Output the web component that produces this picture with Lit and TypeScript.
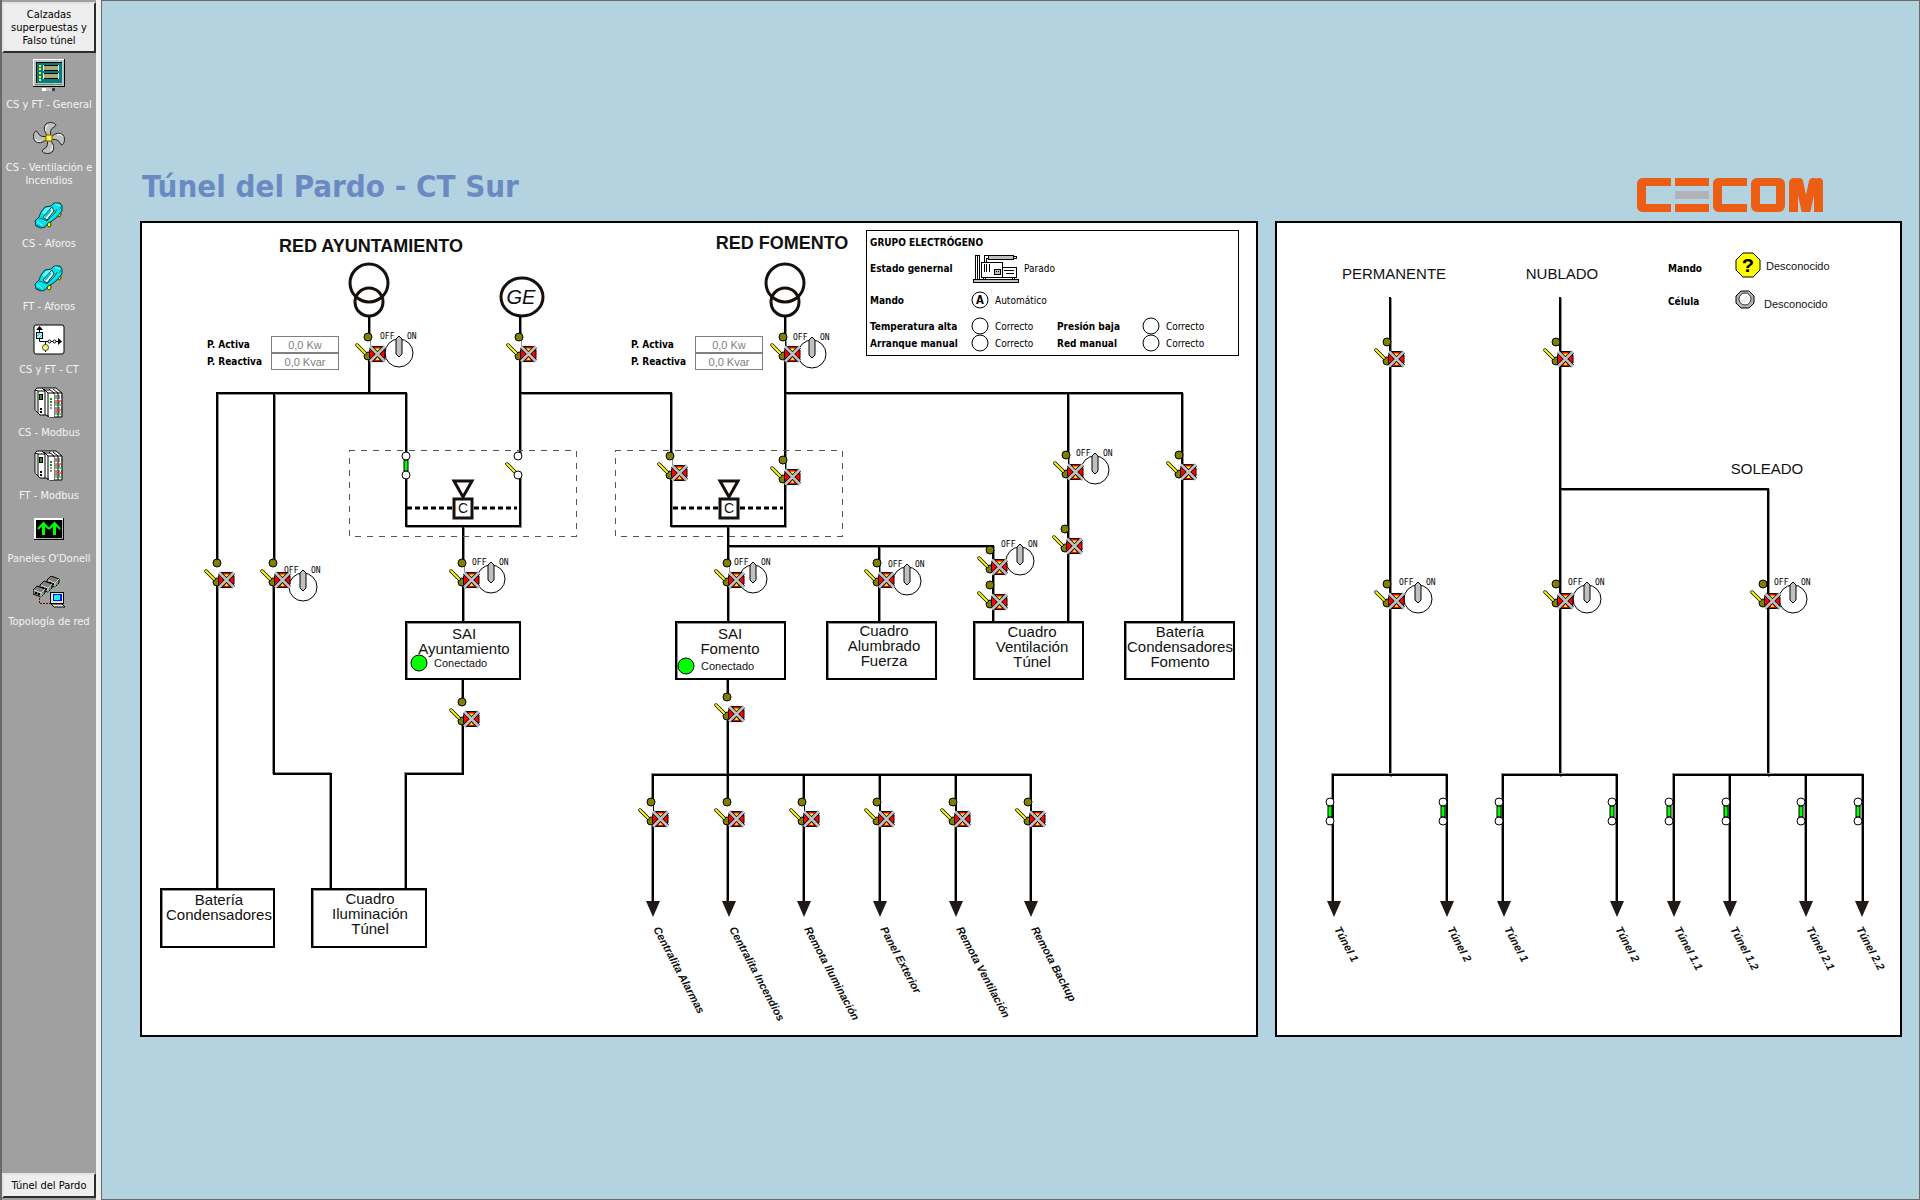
import { LitElement, html, svg, css, TemplateResult } from "lit";
import { customElement, property } from "lit/decorators.js";

type Point = [number, number];

/* ---------- Sidebar icons ---------- */

const monitorIcon = svg`
  <rect x="0" y="0" width="32" height="28" fill="#000"/>
  <rect x="0" y="0" width="31" height="27" fill="#fff"/>
  <rect x="1" y="1" width="30" height="26" fill="#c0c0c0"/>
  <rect x="3" y="3" width="26" height="21" fill="#000"/>
  <rect x="4" y="4" width="25" height="20" fill="#008080"/>
  <path d="M7 6v2M7 9v2M7 13v2M7 17v2M7 20v2" stroke="#ff0" stroke-width="2"/>
  <path d="M11 6.500h14M11 11.500h14M11 14.500h14M11 19.500h14" stroke="#000"/>
  <rect x="11" y="7" width="14" height="4" fill="#b0a878"/>
  <rect x="11" y="15" width="14" height="4" fill="#b0a878"/>
  <path d="M10.500 6v6M25.500 6v6M10.500 14v6M25.500 14v6" stroke="#e8e8e8"/>
  <path d="M2 25.500h27" stroke="#808080"/>
  <rect x="21" y="25" width="2" height="1" fill="#0f0"/>
  <rect x="9" y="29" width="4" height="3" fill="#fff"/>
  <rect x="13" y="29" width="6" height="3" fill="#c0c0c0"/>
  <rect x="19" y="29" width="3" height="3" fill="#404040"/>
`;

const blade = "M15 14C11 10 10 5 13 2c4-3 9-1 10 1 0 2-4 2-5 5-1 2 0 4-1 6z";
const fanIcon = svg`
  <g fill="#c0c0c0" stroke="#222">
    <path d=${blade}/>
    <path d=${blade} transform="rotate(90 16 16)"/>
    <path d=${blade} transform="rotate(180 16 16)"/>
    <path d=${blade} transform="rotate(270 16 16)"/>
  </g>
  <g stroke="#fff" fill="none">
    <path d="M13 9c-1-3 0-5 2-6"/><path d="M24 13c3-1 5 0 6 2"/>
    <path d="M19 23c1 3 0 5-2 6"/><path d="M8 19c-3 1-5 0-6-2"/>
  </g>
  <rect x="13" y="13" width="6" height="6" fill="#ff0" stroke="#806000"/>
  <rect x="15" y="15" width="2" height="2" fill="#fff"/>
`;

const carIcon = svg`
  <ellipse cx="26" cy="16" rx="2" ry="3" fill="#ff0" stroke="#403800"/>
  <ellipse cx="16" cy="26" rx="2" ry="3" fill="#ff0" stroke="#403800"/>
  <path d="M3 28 2 23 6 19 8 14 12 9 18 8 21 5 27 5 29 8 29 13 23 20 19 23 15 25 12 29 8 30z"
        fill="#00e4ec" stroke="#003c40"/>
  <path d="M9 15 13 10 18 9 12 16z" fill="#60ffff"/>
  <path d="M19 9 21 13 14 22 10 19z" fill="#fff" stroke="#003c40"/>
  <path d="M12 19 18 12" stroke="#00c8d0" stroke-width="2" fill="none"/>
  <path d="M6 20 10 21 14 23 22 15 24 11" stroke="#006068" fill="none"/>
  <path d="M22 6 27 8M4 24 9 27" stroke="#9ffcff" fill="none"/>
  <path d="M4 27 8 29M26 12 28 9" stroke="#008890" fill="none"/>
`;

const schemeIcon = svg`
  <rect x="1" y="1" width="30" height="29" rx="2" fill="#fff" stroke="#000"/>
  <path d="M6.500 4v13.500H28M12.500 17v11" stroke="#000" fill="none"/>
  <path d="M3 6 6.500 2 10 6zM25 14 29 17.500 25 21z" fill="#000"/>
  <rect x="3.500" y="8.500" width="6" height="6" fill="#9ff" stroke="#000"/>
  <path d="M4 12 7 9M6 14 9 11" stroke="#4ac"/>
  <circle cx="16.500" cy="17.500" r="1.500" fill="#fff" stroke="#000"/>
  <circle cx="21.500" cy="17.500" r="1.500" fill="#fff" stroke="#000"/>
  <circle cx="12.500" cy="23.500" r="3" fill="#ff8" stroke="#440"/>
`;

const rackIcon = svg`
  <path d="M2 3 4 1H23L29 6V30H17L13 28H7L2 23z" fill="#fff" stroke="#000"/>
  <path d="M2 3 5 4V26M5 4 12 4V28M12 4 9 1M12 3H17" stroke="#000" fill="none"/>
  <path d="M3 5V24" stroke="#a0a0a0"/>
  <rect x="6.500" y="7.500" width="3" height="5" fill="#0a0" stroke="#000"/>
  <path d="M8 21v2M8 24v2" stroke="#000" stroke-width="2"/>
  <path d="M15 6 11 2M21 6 16 2M25 6 20 2M15 6V30M21 6V30M25 6V30M15 6H29" stroke="#000" fill="none"/>
  <rect x="16" y="7" width="5" height="23" fill="#fff"/>
  <path d="M18 11v2M18 14v2" stroke="#00a000" stroke-width="2"/>
  <path d="M18 17v2M18 20v2" stroke="#909090" stroke-width="2"/>
  <path d="M22 9h7M22 11h7M22 16h7M22 21h7M22 25h7" stroke="#222" stroke-dasharray="2 1"/>
  <path d="M22 14h7M22 23h7" stroke="#c00"/>
  <path d="M22 18h7M22 27h7" stroke="#080"/>
`;

const panelIcon = svg`
  <rect x="1" y="5" width="30" height="22" fill="#000"/>
  <rect x="1" y="5" width="29" height="21" fill="#fff"/>
  <rect x="3" y="7" width="27" height="19" fill="#b0b0b0"/>
  <rect x="3" y="7" width="26" height="18" fill="#000"/>
  <path d="M10.500 10v12M21.500 10v12" stroke="#0f0" stroke-width="3"/>
  <path d="M5 16 10.500 10 16 16M16 16 21.500 10 27 16" stroke="#0f0" stroke-width="2" fill="none"/>
`;

const hub = (x: number, y: number) => svg`
  <path d="M${x} ${y + 4} ${x + 4} ${y} ${x + 12} ${y + 3} ${x + 12} ${y + 7} ${x + 8} ${y + 11} ${x} ${y + 8}z"
        fill="#808080" stroke="#000"/>
  <path d="M${x + 1} ${y + 4} ${x + 8} ${y + 7} ${x + 12} ${y + 3}M${x + 8} ${y + 7}v4" stroke="#d0d0d0" fill="none"/>
  <path d="M${x + 2} ${y + 7}h2M${x + 5} ${y + 8}h2" stroke="#000" stroke-width="2"/>
  <path d="M${x + 9} ${y + 8}h2" stroke="#0f0"/>
`;
const networkIcon = svg`
  ${hub(14, 0)}${hub(7, 5)}${hub(0, 10)}
  <path d="M6.500 22V27.500H17" stroke="#700000" stroke-dasharray="2 1" fill="none"/>
  <rect x="17.500" y="16.500" width="13" height="11" fill="#e8e8e0" stroke="#000"/>
  <rect x="20" y="18" width="9" height="7" fill="#00f"/>
  <rect x="21" y="19" width="6" height="5" fill="#0ff"/>
  <path d="M18 28H29L32 31H21z" fill="#e8e8e0" stroke="#000"/>
`;

interface NavItem {
  label: string;
  icon: TemplateResult<2>;
}

const navItems: NavItem[] = [
  { label: "CS y FT - General", icon: monitorIcon },
  { label: "CS - Ventilación e\nIncendios", icon: fanIcon },
  { label: "CS - Aforos", icon: carIcon },
  { label: "FT - Aforos", icon: carIcon },
  { label: "CS y FT - CT", icon: schemeIcon },
  { label: "CS - Modbus", icon: rackIcon },
  { label: "FT - Modbus", icon: rackIcon },
  { label: "Paneles O'Donell", icon: panelIcon },
  { label: "Topología de red", icon: networkIcon },
];

@customElement("nav-bar")
export class NavBar extends LitElement {
  static styles = css`
    :host {
      display: flex;
      flex-direction: column;
      flex: none;
      width: 94px;
      padding: 2px 0;
      background: #a0a0a0;
      border-left: 2px solid #696969;
      border-right: 5px solid #f0f0f0;
      font: 11px/13px "DejaVu Sans Condensed", "DejaVu Sans", sans-serif;
    }
    .group {
      padding: 4px 0;
      border: 2px outset #e3e3e3;
      border-right-color: #808080;
      border-bottom-color: #808080;
      background: #eee;
      color: #000;
      font: inherit;
      white-space: pre-line;
    }
    .items {
      flex: 1;
      display: flex;
      flex-direction: column;
      gap: 11px;
      margin: 0;
      padding: 6px 0 0;
      list-style: none;
    }
    .item {
      display: flex;
      flex-direction: column;
      align-items: center;
      gap: 7px;
      width: 100%;
      padding: 0;
      border: 0;
      background: none;
      color: #f4f4f4;
      font: inherit;
      white-space: pre-line;
    }
    .icon {
      display: block;
      width: 32px;
      height: 32px;
    }
  `;

  render() {
    return html`
      <button class="group">${"Calzadas\nsuperpuestas y\nFalso túnel"}</button>
      <ul class="items">
        ${navItems.map(
          (item) => html`
            <li>
              <button class="item">
                <svg class="icon" viewBox="0 0 32 32" aria-hidden="true">${item.icon}</svg>
                <span>${item.label}</span>
              </button>
            </li>
          `
        )}
      </ul>
      <button class="group">Túnel del Pardo</button>
    `;
  }
}

/* ---------- Company logo, built from bars ---------- */

@customElement("brand-logo")
export class BrandLogo extends LitElement {
  static styles = css`
    :host {
      display: flex;
      gap: 4px;
      height: 34px;
    }
    .open,
    .ring {
      box-sizing: border-box;
      width: 34px;
      border: 8px solid #eb5e14;
      border-width: 8px 9px;
      border-radius: 6px;
    }
    .open {
      border-right: 0;
      border-radius: 6px 0 0 6px;
    }
    .bars {
      display: flex;
      flex-direction: column;
      justify-content: space-between;
      width: 34px;
    }
    .bar {
      height: 8px;
      background: #eb5e14;
    }
    .bar.mid {
      background: #b2b2b8;
    }
    .peaks {
      display: flex;
      width: 34px;
    }
    .post {
      flex: none;
      width: 9px;
      background: #eb5e14;
      border-radius: 5px 4px 0 0;
    }
    .slope {
      flex: none;
      width: 8px;
      background: #eb5e14;
      transform: skewX(12deg);
      border-radius: 3px 3px 0 0;
    }
    .slope.back {
      transform: skewX(-12deg);
    }
  `;

  render() {
    return html`
      <span class="open"></span>
      <span class="bars"><i class="bar"></i><i class="bar mid"></i><i class="bar"></i></span>
      <span class="open"></span>
      <span class="ring"></span>
      <span class="peaks">
        <i class="post"></i><i class="slope"></i><i class="slope back"></i><i class="post"></i>
      </span>
    `;
  }
}

/* ---------- Diagram symbols ---------- */

const wires = (d: string, side = 1) => svg`
  <path class="wire soft" d=${d} transform="translate(${side} ${side})"/>
  <path class="wire" d=${d}/>
`;

const lever = svg`
  <path d="M-11 8-3 16" stroke="#000" stroke-width="3.500" stroke-linecap="round"/>
  <path d="M-11 8-3 16" stroke="#ff0" stroke-width="2" stroke-linecap="round"/>
`;

const breaker = ([x, y]: Point) => svg`
  <g transform="translate(${x} ${y})">
    <rect x="-14" y="0" width="16" height="19" fill="#fff"/>
    <circle class="terminal" cx="0" cy="0" r="4"/>
    <circle class="terminal" cx="0" cy="19" r="4"/>
    ${lever}
    <path d="M5 9.500H13.500L17 13V21L13.500 24.500H5L1.500 21V13z" fill="#f00" stroke="#000"/>
    <path d="M6 11.500H13L9.500 15zM7.500 23H11.500L9.500 20z" fill="#ff0"/>
    <path d="M2.500 10 16.500 24M16.500 10 2.500 24" stroke="#000" stroke-width="4"/>
    <path d="M2 9.500 17 24.500M17 9.500 2 24.500" stroke="#c0c0c0" stroke-width="2.500"/>
  </g>
`;

const openContact = ([x, y]: Point) => svg`
  <g transform="translate(${x} ${y})">
    <rect x="-14" y="0" width="18" height="19" fill="#fff"/>
    <circle class="contact" cx="0" cy="0" r="4"/>
    ${lever}
    <circle class="contact" cx="0" cy="19" r="4"/>
  </g>
`;

const closedContact = ([x, y]: Point) => svg`
  <g transform="translate(${x} ${y})">
    <rect x="-2" y="4" width="4" height="11" fill="#0f0" stroke="#000"/>
    <circle class="contact" cx="0" cy="0" r="4"/>
    <circle class="contact" cx="0" cy="19" r="4"/>
  </g>
`;

const selector = ([x, y]: Point) => svg`
  <g transform="translate(${x} ${y})">
    <circle r="14" fill="#fff" stroke="#000"/>
    <path d="M0-17 3-14V1L0 4-3 1V-14z" fill="#c0c0c0" stroke="#000"/>
    <text class="pos" x="-19" y="-14">OFF</text>
    <text class="pos" x="8" y="-14">ON</text>
  </g>
`;

const transformer = (x: number) => svg`
  <circle class="ring" cx=${x} cy="283" r="19"/>
  <circle class="ring" cx=${x} cy="302" r="14"/>
`;

const transferUnit = (x: number) => svg`
  <rect class="zone" x=${x - 114} y="450" width="227" height="86"/>
  <path class="link" d="M${x - 56} 508H${x - 11}M${x + 11} 508H${x + 54}"/>
  <path class="solid" d="M${x - 9} 481H${x + 9}L${x} 497z"/>
  <rect class="solid" x=${x - 9} y="499" width="18" height="19"/>
  <text class="mark" x=${x} y="513">C</text>
`;

const unit = (x: number, y: number, w: number, h: number) => svg`
  <rect class="box soft" x=${x + 1} y=${y + 1} width=${w - 1} height=${h - 1}/>
  <rect class="box edge" x=${x} y=${y} width=${w} height=${h}/>
`;

const caption = (x: number, y: number, lines: string[]) => svg`
  <text class="caption">
    ${lines.map((line, i) => svg`<tspan x=${x} y=${y + i * 15}>${line}</tspan>`)}
  </text>
`;

const online = (x: number, y: number) => svg`
  <circle cx=${x} cy=${y} r="8" fill="#0f0" stroke="#000"/>
  <text class="small" x=${x + 15} y=${y + 4}>Conectado</text>
`;

const feeder = (x: number, label: string, labelX = x) => svg`
  <path d="M${x - 7} 901H${x + 7}L${x} 917z" fill="#1f1a17"/>
  <text class="feeder" transform="translate(${labelX} 929) rotate(62)">${label}</text>
`;

const diagramStyles = css`
  :host {
    display: block;
    border: 2px solid #000;
    background: #fff;
  }
  .canvas {
    display: block;
    width: 100%;
  }
  .wire {
    fill: none;
    stroke: #000;
    stroke-width: 2;
    stroke-linecap: square;
  }
  .wire.soft {
    stroke: #948f8c;
  }
  .terminal {
    fill: #808000;
    stroke: #000;
  }
  .contact {
    fill: #fff;
    stroke: #000;
  }
  .ring,
  .solid {
    fill: none;
    stroke: #15100e;
    stroke-width: 3;
  }
  .solid {
    fill: #fff;
  }
  .zone {
    fill: none;
    stroke: #555;
    stroke-dasharray: 6 6;
    shape-rendering: crispEdges;
  }
  .link {
    fill: none;
    stroke: #000;
    stroke-width: 3;
    stroke-dasharray: 5 3;
  }
  .box {
    fill: #fff;
    stroke: #948f8c;
    stroke-width: 2;
  }
  .box.edge {
    fill: none;
    stroke: #000;
  }
  text {
    font-family: "Liberation Sans", Arial, sans-serif;
    fill: #111;
  }
  .pos {
    font: 8px "DejaVu Sans Mono", monospace;
    fill: #000;
  }
  .mark {
    font-size: 14px;
    text-anchor: middle;
  }
  .caption {
    font-size: 15px;
    text-anchor: middle;
  }
  .source {
    font-size: 18px;
    font-weight: bold;
    text-anchor: middle;
  }
  .generator {
    font-size: 20px;
    font-style: italic;
    text-anchor: middle;
  }
  .feeder {
    font-size: 11px;
    font-style: italic;
    font-weight: bold;
  }
  .small {
    font-size: 11px;
  }
  .strong {
    font: bold 10px "DejaVu Sans Condensed", "DejaVu Sans", sans-serif;
    fill: #000;
  }
`;

@customElement("power-readout")
export class PowerReadout extends LitElement {
  static styles = css`
    :host {
      display: grid;
      grid-template-columns: 64px 68px;
      grid-auto-rows: 17px;
      align-items: stretch;
      font: bold 10px/17px "DejaVu Sans Condensed", "DejaVu Sans", sans-serif;
    }
    .value {
      box-sizing: border-box;
      width: 100%;
      min-width: 0;
      height: 17px;
      margin: 0;
      padding: 0;
      border: 1px solid #808080;
      background: #fff;
      color: #808080;
      font: 11px "Liberation Sans", Arial, sans-serif;
      text-align: center;
    }
  `;

  render() {
    return html`
      <label for="active">P. Activa</label>
      <input class="value" id="active" readonly value="0,0 Kw" />
      <label for="reactive">P. Reactiva</label>
      <input class="value" id="reactive" readonly value="0,0 Kvar" />
    `;
  }
}

@customElement("generator-status")
export class GeneratorStatus extends LitElement {
  static styles = css`
    :host {
      display: grid;
      box-sizing: border-box;
      height: 100%;
      grid-template-columns: 102px 85px 86px 1fr;
      grid-template-rows: 22px 30px 35px 17px 17px;
      align-items: center;
      padding-left: 3px;
      border: 1px solid #000;
      background: #fff;
      color: #000;
      font: 10px/13px "DejaVu Sans Condensed", "DejaVu Sans", sans-serif;
    }
    .title,
    .name {
      margin: 0;
      font-size: 10px;
      font-weight: bold;
    }
    .title {
      grid-column: 1 / -1;
    }
    .wide {
      grid-column: 2 / -1;
    }
    .state {
      display: flex;
      align-items: center;
      gap: 6px;
    }
    .lamp {
      display: block;
      flex: none;
      overflow: visible;
    }
    .letter {
      font: bold 13px "Liberation Mono", monospace;
      text-anchor: middle;
    }
  `;

  private lamp(letter = "") {
    return html`
      <svg class="lamp" width="17" height="17" viewBox="0 0 17 17" aria-hidden="true">
        <circle cx="8" cy="8" r="8" fill="#fff" stroke="#000" />
        <text class="letter" x="8" y="12">${letter}</text>
      </svg>
    `;
  }

  private state(name: string) {
    return html`
      <span class="name">${name}</span>
      <span class="state">${this.lamp()}Correcto</span>
    `;
  }

  render() {
    return html`
      <h2 class="title">GRUPO ELECTRÓGENO</h2>
      <span class="name">Estado genernal</span>
      <span class="state wide">
        <svg class="lamp" width="46" height="29" viewBox="0 0 46 29" shape-rendering="crispEdges" aria-hidden="true">
          <g fill="#fff" stroke="#000">
            <path d="M3 2 5 1H7V25H3zM5 1V25" />
            <path d="M12 8V3Q12 1 14 1H17V4H14V8" />
            <rect x="16" y="1" width="25" height="4" fill="#c0c0c0" />
            <rect x="41" y="2" width="3" height="2" />
            <rect x="9" y="8" width="21" height="15" />
            <path d="M12 10V18M14 10V18M17 10V18" />
            <path d="M30 13H44V23H30zM32 16H42M34 19H42" />
            <rect x="22" y="15" width="6" height="5" fill="#c0c0c0" />
            <path d="M24 17v1M26 17v1" />
            <path d="M11 23v2M13 23v2M40 23v2M42 23v2" />
            <rect x="1" y="25" width="45" height="3" fill="#c0c0c0" />
          </g>
        </svg>
        Parado
      </span>
      <span class="name">Mando</span>
      <span class="state wide">${this.lamp("A")}Automático</span>
      ${this.state("Temperatura alta")} ${this.state("Presión baja")}
      ${this.state("Arranque manual")} ${this.state("Red manual")}
    `;
  }
}

@customElement("supply-diagram")
export class SupplyDiagram extends LitElement {
  static styles = diagramStyles;

  private breakers: Point[] = [
    [368, 337], [519, 337], [783, 337],
    [217, 563], [273, 563], [462, 563], [462, 702],
    [670, 456], [783, 460], [727, 563], [727, 697],
    [877, 563], [990, 550], [990, 585],
    [1066, 455], [1065, 529], [1179, 455],
    [651, 802], [727, 802], [802, 802], [877, 802], [953, 802], [1028, 802],
  ];

  private selectors: Point[] = [
    [399, 353], [812, 354], [303, 587], [491, 579],
    [753, 579], [907, 581], [1020, 561], [1095, 470],
  ];

  render() {
    return html`
      <svg class="canvas" viewBox="142 223 1114 812">
        ${wires(`M369 317V393M217 889V393H406V526H520V393H671V526H785V317
          M520 316V393M463 526V622M728 526V622M728 546H993V622M879 546V622
          M785 393H1182V622M1068 393V622M274 393V560`)}
        ${wires(`M274 560V774H331V889M463 679V774H406V889
          M728 679V901M653 901V775H1031V901M804 775V901M880 775V901M956 775V901`, -1)}
        ${transferUnit(463)} ${transferUnit(729)}
        ${transformer(369)} ${transformer(785)}
        <ellipse class="ring" cx="522" cy="297" rx="21" ry="19" />
        <text class="generator" x="521" y="304">GE</text>
        <text class="source" x="371" y="252">RED AYUNTAMIENTO</text>
        <text class="source" x="782" y="249">RED FOMENTO</text>

        ${unit(161, 889, 113, 58)} ${unit(312, 889, 114, 58)}
        ${unit(406, 622, 114, 57)} ${unit(676, 622, 109, 57)}
        ${unit(827, 622, 109, 57)} ${unit(974, 622, 109, 57)} ${unit(1125, 622, 109, 57)}
        ${caption(219, 905, ["Batería", "Condensadores"])}
        ${caption(370, 904, ["Cuadro", "Iluminación", "Túnel"])}
        ${caption(464, 639, ["SAI", "Ayuntamiento"])}
        ${caption(730, 639, ["SAI", "Fomento"])}
        ${caption(884, 636, ["Cuadro", "Alumbrado", "Fuerza"])}
        ${caption(1032, 637, ["Cuadro", "Ventilación", "Túnel"])}
        ${caption(1180, 637, ["Batería", "Condensadores", "Fomento"])}
        ${online(419, 663)} ${online(686, 666)}

        ${closedContact([406, 456])} ${openContact([518, 456])}
        ${this.selectors.map(selector)} ${this.breakers.map(breaker)}

        ${feeder(653, "Centralita Alarmas")} ${feeder(729, "Centralita Incendios")}
        ${feeder(804, "Remota Iluminación")} ${feeder(880, "Panel Exterior")}
        ${feeder(956, "Remota Ventilación")} ${feeder(1031, "Remota Backup")}

        <foreignObject x="207" y="336" width="132" height="34">
          <power-readout></power-readout>
        </foreignObject>
        <foreignObject x="631" y="336" width="132" height="34">
          <power-readout></power-readout>
        </foreignObject>
        <foreignObject x="866" y="230" width="373" height="126">
          <generator-status></generator-status>
        </foreignObject>
      </svg>
    `;
  }
}

@customElement("lighting-diagram")
export class LightingDiagram extends LitElement {
  static styles = [
    diagramStyles,
    css`
      .unknown {
        font: bold 20px "Liberation Mono", monospace;
        fill: #000;
        text-anchor: middle;
      }
    `,
  ];

  private breakers: Point[] = [
    [1387, 342], [1556, 342], [1387, 584], [1556, 584], [1763, 584],
  ];

  private selectors: Point[] = [[1418, 599], [1587, 599], [1793, 599]];

  private contacts: Point[] = [
    [1330, 802], [1443, 802], [1499, 802], [1612, 802],
    [1669, 802], [1726, 802], [1801, 802], [1858, 802],
  ];

  render() {
    return html`
      <svg class="canvas" viewBox="1277 223 623 812">
        ${wires("M1390 298V775M1560 298V775M1560 489H1768V775")}
        ${wires(`M1333 901V775H1447V901M1503 901V775H1617V901
          M1674 901V775H1863V901M1730 775V901M1806 775V901`, -1)}
        ${caption(1394, 279, ["PERMANENTE"])}
        ${caption(1562, 279, ["NUBLADO"])}
        ${caption(1767, 474, ["SOLEADO"])}
        ${this.selectors.map(selector)} ${this.breakers.map(breaker)}
        ${this.contacts.map(closedContact)}

        ${feeder(1334, "Túnel 1")} ${feeder(1447, "Túnel 2")}
        ${feeder(1504, "Túnel 1")} ${feeder(1617, "Túnel 2", 1615)}
        ${feeder(1674, "Túnel 1.1")} ${feeder(1730, "Túnel 1.2")}
        ${feeder(1806, "Túnel 2.1")} ${feeder(1862, "Túnel 2.2", 1856)}

        <text class="strong" x="1668" y="272">Mando</text>
        <path d="M1743 253H1753L1760 260V270L1753 277H1743L1736 270V260z" fill="#ff0" stroke="#000" />
        <text class="unknown" x="1748" y="272">?</text>
        <text class="small" x="1766" y="270">Desconocido</text>
        <text class="strong" x="1668" y="305">Célula</text>
        <path d="M1741 291H1749L1754 296V303L1749 308H1741L1736 303V296z" fill="#b4b4b4" stroke="#000" />
        <circle cx="1745" cy="299" r="6" fill="#fff" stroke="#333" />
        <path d="M1742 302 1747 296M1744 303 1748 298" stroke="#d0d0d0" />
        <text class="small" x="1764" y="308">Desconocido</text>
      </svg>
    `;
  }
}

/* ---------- Page ---------- */

@customElement("app-root")
export class AppRoot extends LitElement {
  @property() heading = "Túnel del Pardo - CT Sur";

  static styles = css`
    :host {
      display: flex;
      min-height: 100vh;
      background: #f0f0f0;
    }
    .screen {
      flex: 1;
      min-width: 0;
      box-sizing: border-box;
      padding: 0 17px 0 38px;
      border: 1px solid #696969;
      background: #b4d3e0;
    }
    .header {
      display: flex;
      justify-content: space-between;
      align-items: flex-start;
      padding: 167px 79px 0 2px;
    }
    .heading {
      margin: 0;
      padding-bottom: 17px;
      color: #6b8ac3;
      font: bold 31px/36px "DejaVu Sans Condensed", "DejaVu Sans", sans-serif;
    }
    .logo {
      margin-top: 10px;
    }
    .diagrams {
      display: grid;
      grid-template-columns: minmax(0, 1118fr) minmax(0, 627fr);
      gap: 17px;
      align-items: start;
    }
  `;

  render() {
    return html`
      <nav-bar></nav-bar>
      <main class="screen">
        <header class="header">
          <h1 class="heading">${this.heading}</h1>
          <brand-logo class="logo" role="img" aria-label="CECOM"></brand-logo>
        </header>
        <div class="diagrams">
          <supply-diagram></supply-diagram>
          <lighting-diagram></lighting-diagram>
        </div>
      </main>
    `;
  }
}
